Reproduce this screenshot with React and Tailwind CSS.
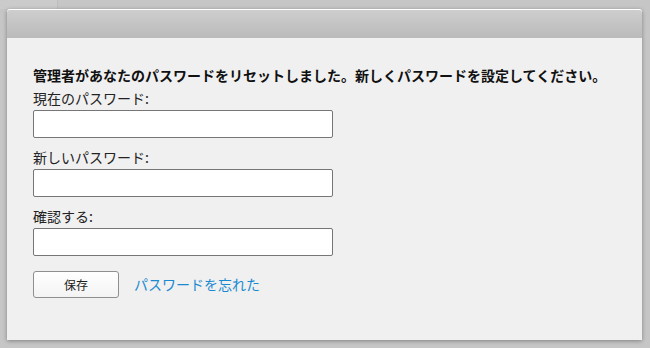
const Field = ({ label }) => (
  <div className="flex flex-col">
    <label className="text-[14px] leading-[20px] text-[#222]">{label}</label>
    <input
      type="password"
      className="mt-[2px] h-[28px] w-[300px] border border-[#767676] rounded-[2px] bg-white"
    />
  </div>
);

const App = () => {
  return (
    <div
      className="h-[348px] w-[650px] bg-[#c6c6c6] flex"
      style={{ fontFamily: '"Noto Sans CJK JP", "Noto Sans", sans-serif' }}
    >
      <div className="flex-1 flex flex-col">
        <div className="h-[9px] flex">
          <div className="w-[58px] bg-[#cbcbcb] border-r border-[#bdbdbd]" />
        </div>
        <div className="ml-[7px] mr-[8px] h-[331px] flex flex-col bg-[#f0f0f0] border-t border-white shadow-[0_1px_4px_rgba(0,0,0,0.35)] rounded-t-[3px]">
          <div className="h-[28px] bg-gradient-to-b from-[#cecece] to-[#bababa] rounded-t-[3px]" />
          <div className="px-[26px] pt-[27px] flex flex-col">
            <h2 className="text-[14px] leading-[20px] font-bold text-[#111]">
              管理者があなたのパスワードをリセットしました。新しくパスワードを設定してください。
            </h2>
            <div className="mt-[3px] flex flex-col gap-[9px]">
              <Field label="現在のパスワード:" />
              <Field label="新しいパスワード:" />
              <Field label="確認する:" />
            </div>
            <div className="mt-[15px] flex items-center gap-[15px]">
              <button className="h-[27px] w-[86px] border border-[#8f8f8f] rounded-[3px] bg-gradient-to-b from-white to-[#f3f3f3] text-[12px] text-[#222]">
                保存
              </button>
              <a href="#" className="text-[14px] text-[#1a8ad0]">
                パスワードを忘れた
              </a>
            </div>
          </div>
        </div>
      </div>
    </div>
  );
};

export default App;
